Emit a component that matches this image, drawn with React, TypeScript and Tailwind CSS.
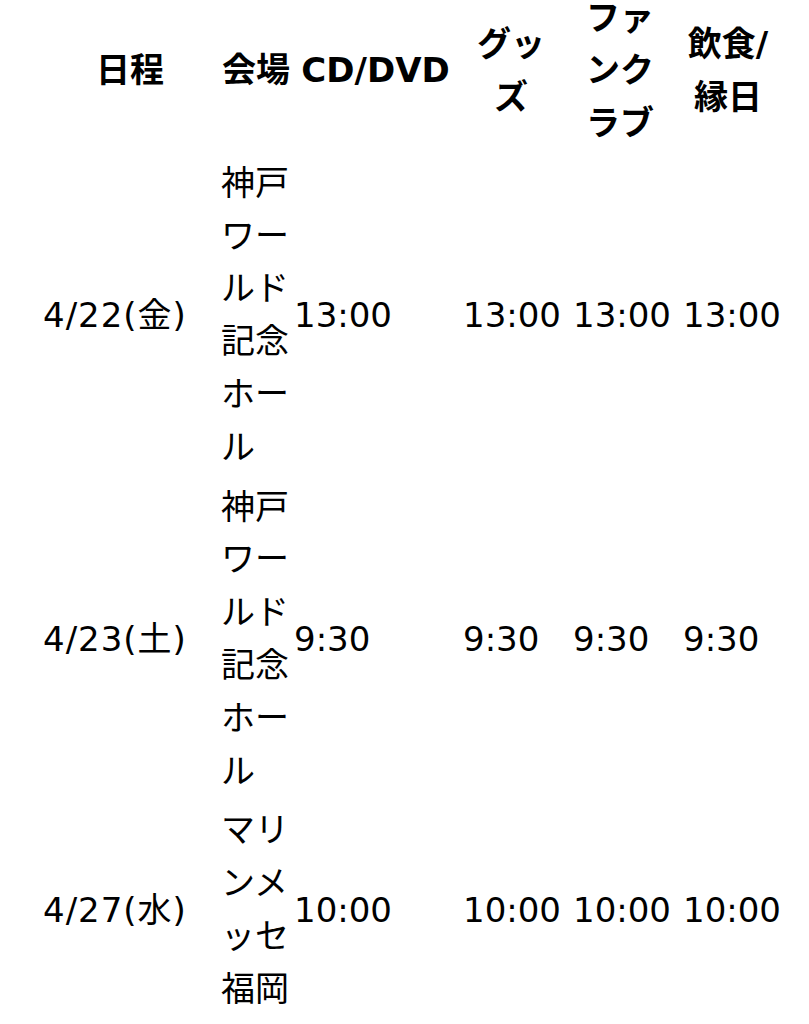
const header = [
  { lines: ["日程"], cls: "pr-[4px]" },
  { lines: ["会場"], cls: "pr-[3px]" },
  { lines: ["CD/DVD"], cls: "pr-[6px]" },
  { lines: ["グッ", "ズ"], cls: "pr-[14px]" },
  { lines: ["ファ", "ンク", "ラブ"], cls: "pr-[16px]" },
  { lines: ["飲食/", "縁日"], cls: "pr-0" },
];

const rows = [
  { date: "4/22(金)", venue: ["神戸", "ワー", "ルド", "記念", "ホー", "ル"], time: "13:00" },
  { date: "4/23(土)", venue: ["神戸", "ワー", "ルド", "記念", "ホー", "ル"], time: "9:30" },
  { date: "4/27(水)", venue: ["マリ", "ンメ", "ッセ", "福岡"], time: "10:00" },
];

function Lines({ lines }: { lines: string[] }) {
  return (
    <>
      {lines.map((l, i) => (
        <span key={i} className="block">
          {l}
        </span>
      ))}
    </>
  );
}

export default function App() {
  return (
    <div className="min-h-screen bg-white overflow-hidden">
      <div className="-mt-[12px] ml-[43px] grid grid-cols-[178px_73px_169px_110px_110px_90px] items-center text-[34px] leading-[52.8px] text-black [font-family:'DejaVu_Sans','Noto_Sans_CJK_JP',sans-serif]">
        {/* header */}
        {header.map((h, i) => (
          <div key={i} className={`py-[3.5px] text-center font-bold whitespace-nowrap ${h.cls}`}>
            <Lines lines={h.lines} />
          </div>
        ))}

        {/* rows */}
        {rows.map((r) => (
          <div key={r.date} className="contents">
            <div className="py-[3.5px] whitespace-nowrap tracking-[1px]">{r.date}</div>
            <div className="py-[3.5px] whitespace-nowrap">
              <Lines lines={r.venue} />
            </div>
            <div className="py-[3.5px] whitespace-nowrap">{r.time}</div>
            <div className="py-[3.5px] whitespace-nowrap">{r.time}</div>
            <div className="py-[3.5px] whitespace-nowrap">{r.time}</div>
            <div className="py-[3.5px] whitespace-nowrap">{r.time}</div>
          </div>
        ))}
      </div>
    </div>
  );
}
